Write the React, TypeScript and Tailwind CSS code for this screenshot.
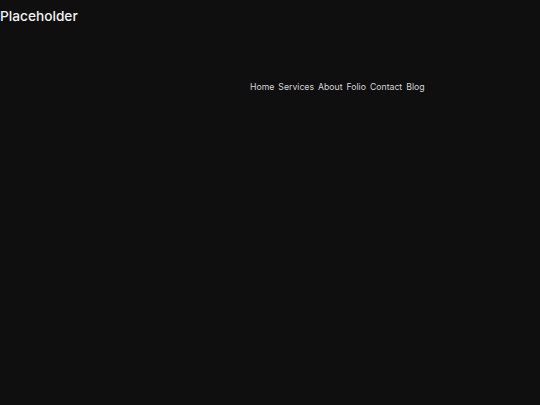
export default function App() {
  const links = ['Home', 'Services', 'About', 'Folio', 'Contact', 'Blog'];
  return (
    <div className="min-h-screen w-full bg-[#0f0f0f] font-['Inter',sans-serif]">
      <header className="flex flex-col">
        <h1 className="pt-[7px] text-[13.7px] font-medium leading-[18px] text-[#f2f2f2]">Placeholder</h1>
        <nav className="mt-[56px] flex gap-[4px] pl-[250px] text-[8.7px] leading-[12px] text-[#d4d4d4]">
          {links.map((l) => (
            <a key={l} href="#">{l}</a>
          ))}
        </nav>
      </header>
    </div>
  );
}
